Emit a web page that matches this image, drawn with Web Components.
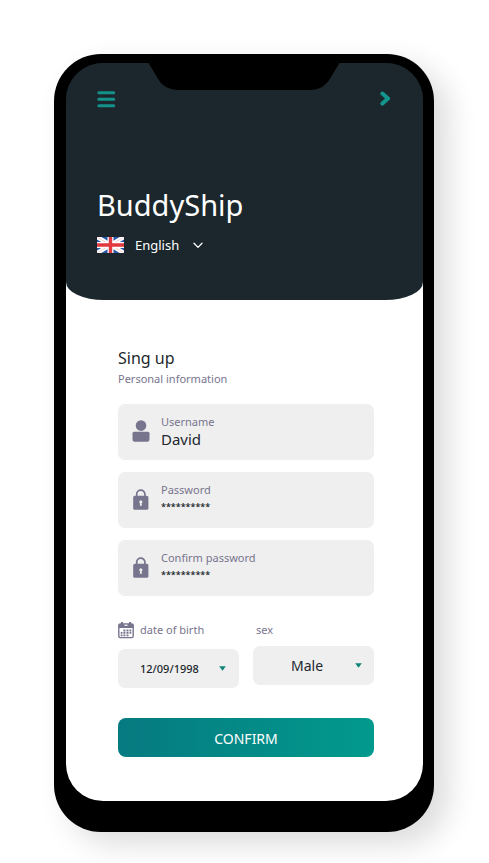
<!DOCTYPE html>
<html lang="en">
<head>
<meta charset="utf-8">
<meta name="viewport" content="width=device-width, initial-scale=1">
<title>BuddyShip</title>
<style>
  body {
    margin: 0;
    background: #fff;
    color: #22282e;
    font-family: "Noto Sans", "Open Sans", sans-serif;
    --ink: #22282e;
    --muted: #77748e;
    --teal: #0f8d83;
    --dark: #1b272c;
    --box: #efefef;
  }
</style>
</head>
<body>
<phone-frame>
  <app-header slot="header" name="BuddyShip"></app-header>
  <signup-form>
    <text-field label="Username" value="David" icon="user"></text-field>
    <text-field label="Password" value="**********" icon="lock" masked></text-field>
    <text-field label="Confirm password" value="**********" icon="lock" masked></text-field>
    <date-field slot="pair" label="date of birth" value="12/09/1998"></date-field>
    <choice-field slot="pair" label="sex" options="Male,Female"></choice-field>
    <confirm-button slot="action">CONFIRM</confirm-button>
  </signup-form>
</phone-frame>

<script>
const define = (name, render) => customElements.define(name, class extends HTMLElement {
  connectedCallback() {
    if (this.shadowRoot) return;
    const root = this.attachShadow({ mode: "open" });
    root.innerHTML = "<style>*{box-sizing:border-box}button,input,select{font-family:inherit;margin:0;border:0;padding:0;background:none;outline-offset:2px}svg{display:block}</style>" + render(this);
  }
});

define("phone-frame", () => `
  <style>
    :host { display: block; padding: 54px 55px 30px 54px; max-width: 520px; margin: 0 auto; box-sizing: border-box; }
    .case { position: relative; padding: 9px 11px 31px 12px; background: #000; border-radius: 47px;
      box-shadow: 14px 12px 30px rgba(0,0,0,.14); }
    .screen { background: linear-gradient(var(--dark) 100px, #fff 100px); border-radius: 37px; overflow: hidden; }
    .notch { position: absolute; top: 8px; left: 50%; margin-left: -96px; }
  </style>
  <div class="case">
    <main class="screen"><slot name="header"></slot><slot></slot></main>
    <svg class="notch" width="192" height="28" viewBox="0 0 192 28" aria-hidden="true">
      <path d="M0 0H192L183 15C178 24 171 28 162 28H31C20 28 13 23 9 15Z"/>
    </svg>
  </div>`);

define("app-header", el => `
  <style>
    :host { display: block; background: var(--dark); color: #fff; padding: 28px 32px 45px 31px; border-radius: 0 0 38px 38px / 0 0 18px 18px; }
    .bar { display: flex; justify-content: space-between; align-items: flex-start; }
    button { display: block; cursor: pointer; }
    h1 { margin: 76px 0 9px; font-size: 29px; line-height: 42px; font-weight: 400; }
    .lang { display: flex; align-items: center; gap: 11px; }
    .pick { display: flex; align-items: center; gap: 14px; }
    select { appearance: none; color: #fff; font-size: 13px; line-height: 20px; height: 20px; font-weight: 400; field-sizing: content; }
    option { color: #000; }
  </style>
  <div class="bar">
    <button type="button" aria-label="Menu">
      <svg width="19" height="17" viewBox="0 0 19 17" fill="none" stroke="#14928a" stroke-width="3" stroke-linecap="round"><path d="M1.8 1.8H16.7M1.8 8.3H16.7M1.8 14.8H16.7"/></svg>
    </button>
    <button type="button" aria-label="Next">
      <svg width="12" height="16" viewBox="0 0 12 16" fill="none" stroke="#14958c" stroke-width="4" stroke-linecap="round" stroke-linejoin="round"><path d="M3.4 2.6L9 7.6L3.4 12.6"/></svg>
    </button>
  </div>
  <h1>${el.getAttribute("name")}</h1>
  <div class="lang">
    <svg width="27" height="16" viewBox="0 0 27 16" aria-hidden="true">
      <rect width="27" height="16" fill="#2557a8"/>
      <path d="M0 0L27 16M27 0L0 16" stroke="#fff" stroke-width="4.4"/>
      <path d="M0 0L10 6M27 16L17 10M27 0L17 6M0 16L10 10" stroke="#f5c3c6" stroke-width=".8"/>
      <path d="M13.5 0V16M0 8H27" stroke="#fff" stroke-width="6"/>
      <path d="M13.5 0V16M0 8H27" stroke="#e2383f" stroke-width="3.4"/>
    </svg>
    <div class="pick">
      <select aria-label="Language"><option>English</option></select>
      <svg width="10" height="7" viewBox="0 0 10 7" fill="none" stroke="#fff" stroke-width="1.3" stroke-linecap="round" stroke-linejoin="round" aria-hidden="true"><path d="M1 1.2L5 5.4L9 1.2"/></svg>
    </div>
  </div>`);

define("signup-form", () => `
  <style>
    :host { display: block; padding: 46px 49px 44px 52px; }
    h2 { margin: 0; font-size: 16px; line-height: 24px; font-weight: 400; }
    p { margin: 0 0 16px; font-size: 11px; line-height: 18px; color: var(--muted); }
    .fields { display: grid; gap: 12px; }
    .pair { display: grid; grid-template-columns: repeat(2, minmax(0, 1fr)); gap: 14px; align-items: start; margin: 24px 0 30px; }
  </style>
  <form>
    <h2>Sing up</h2>
    <p>Personal information</p>
    <div class="fields"><slot></slot></div>
    <div class="pair"><slot name="pair"></slot></div>
    <slot name="action"></slot>
  </form>`);

const icons = {
  user: `<svg width="18" height="24" viewBox="0 0 18 24" fill="#77748e" aria-hidden="true"><circle cx="9" cy="6.6" r="5.3"/><path d="M2 12.8H16Q17.5 12.8 17.5 14.3V20Q17.5 22.8 15.5 22.8H2.5Q.5 22.8 .5 20V14.3Q.5 12.8 2 12.8Z"/></svg>`,
  lock: `<svg width="18" height="24" viewBox="0 0 18 24" aria-hidden="true"><path d="M4.7 10V7.2A4.1 4.1 0 0 1 12.9 7.2V10" fill="none" stroke="#77748e" stroke-width="1.7"/><rect x="1.2" y="8.8" width="15.2" height="14" rx="1.6" fill="#77748e"/><path d="M8.8 13.2A1.8 1.8 0 0 1 9.6 16.5L9.9 18.8H7.8L8.1 16.5A1.8 1.8 0 0 1 8.8 13.2Z" fill="#efefef"/></svg>`
};

define("text-field", el => {
  const masked = el.hasAttribute("masked");
  return `
  <style>
    :host { display: block; }
    .box { display: flex; align-items: center; gap: 11px; padding: 10px 14px 12px; background: var(--box); border-radius: 7px; }
    .text { flex: 1; min-width: 0; }
    label { display: block; font-size: 11px; line-height: 16px; color: var(--muted); }
    input { display: block; width: 100%; height: 18px; font-size: 15px; line-height: 18px; color: var(--ink); }
    .masked { font-size: 9px; font-weight: 600; }
  </style>
  <div class="box">
    ${icons[el.getAttribute("icon")]}
    <div class="text">
      <label for="f">${el.getAttribute("label")}</label>
      <input id="f" class="${masked ? "masked" : ""}" type="text" autocomplete="off" value="${el.getAttribute("value")}">
    </div>
  </div>`;
});

const triangle = `<svg width="7" height="5" viewBox="0 0 7 5" fill="#0f8578" aria-hidden="true"><path d="M.2 .3H6.8L3.5 4.8Z"/></svg>`;

define("date-field", el => `
  <style>
    :host { display: block; }
    label { display: flex; align-items: center; gap: 6px; height: 20px; margin-bottom: 9px; font-size: 11px; line-height: 20px; color: var(--muted); }
    .box { display: flex; align-items: center; padding: 0 13px 0 22px; height: 39px; background: var(--box); border-radius: 7px; }
    input { flex: 1; min-width: 0; font-size: 11px; line-height: 18px; font-weight: 500; color: var(--ink); }
  </style>
  <label for="d">
    <svg width="16" height="18" viewBox="0 0 16 18" aria-hidden="true">
      <path d="M4 1V4M12 1V4" stroke="#77748e" stroke-width="2"/>
      <rect x=".8" y="3" width="14.4" height="13.6" rx="1.6" fill="none" stroke="#77748e" stroke-width="1.4"/>
      <rect x=".8" y="3" width="14.4" height="4" fill="#77748e"/>
      <path d="M6.5 4.2H9.5" stroke="#fff" stroke-width="1.2"/>
      <path d="M5.4 8.4H7.4V10.4H5.4ZM8.5 8.4H10.5V10.4H8.5ZM11.5 8.4H13.3V10.4H11.5ZM2.7 11H4.5V12.8H2.7ZM5.4 11H7.4V12.8H5.4ZM8.5 11H10.5V12.8H8.5ZM11.5 11H13.3V12.8H11.5ZM2.7 13.4H4.5V15.2H2.7ZM5.4 13.4H7.4V15.2H5.4ZM8.5 13.4H10.5V15.2H8.5Z" fill="#77748e"/>
    </svg>
    ${el.getAttribute("label")}
  </label>
  <div class="box"><input id="d" type="text" inputmode="numeric" value="${el.getAttribute("value")}">${triangle}</div>`);

define("choice-field", el => `
  <style>
    :host { display: block; }
    label { display: block; margin: 0 3px 6px; font-size: 11px; line-height: 20px; color: var(--muted); }
    .box { display: flex; align-items: center; padding: 0 12px 0 38px; height: 39px; background: var(--box); border-radius: 7px; }
    select { flex: 1; min-width: 0; appearance: none; height: 20px; font-size: 14px; line-height: 20px; color: var(--ink); }
  </style>
  <label for="s">${el.getAttribute("label")}</label>
  <div class="box"><select id="s">${el.getAttribute("options").split(",").map(o => `<option>${o}</option>`).join("")}</select>${triangle}</div>`);

define("confirm-button", () => `
  <style>
    :host { display: block; }
    button { display: block; width: 100%; height: 39px; padding-top: 3px; border-radius: 8px; color: #fff; font-size: 14px; line-height: 20px; cursor: pointer;
      background: linear-gradient(90deg, #067a80, #029a8e); }
  </style>
  <button type="submit"><slot></slot></button>`);
</script>
</body>
</html>
